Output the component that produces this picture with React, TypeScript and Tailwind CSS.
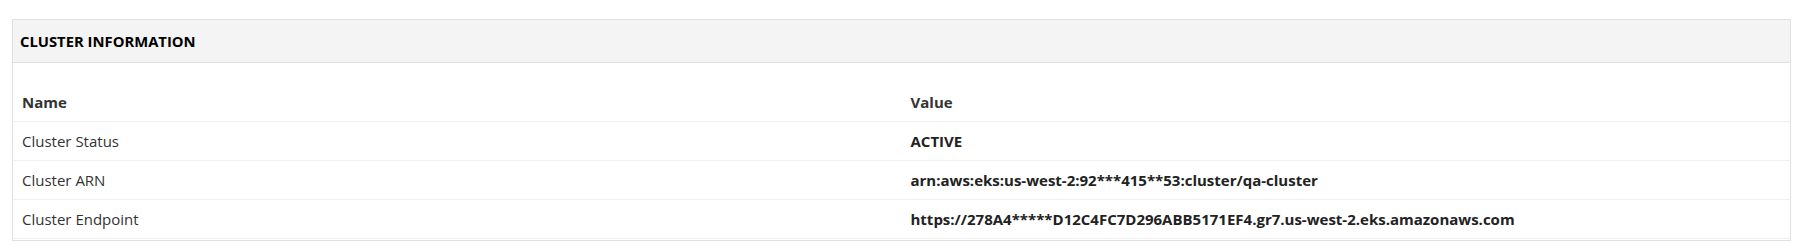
const rows = [
  { name: "Cluster Status", value: "ACTIVE" },
  { name: "Cluster ARN", value: "arn:aws:eks:us-west-2:92***415**53:cluster/qa-cluster" },
  {
    name: "Cluster Endpoint",
    value: "https://278A4*****D12C4FC7D296ABB5171EF4.gr7.us-west-2.eks.amazonaws.com",
  },
];

const App = () => {
  return (
    <div className="pt-[19px] pl-[12px] pr-[13px] bg-white font-['Open_Sans',sans-serif] text-[15px] text-[#333]">
      <div className="border border-[#e0e0e0]">
        <div className="h-[43px] flex items-center px-[7px] bg-[#f4f4f4] border-b border-[#e0e0e0]">
          <h3 className="font-bold text-[14.8px] text-black">CLUSTER INFORMATION</h3>
        </div>
        <div className="pt-[20px] pb-[1px]">
          <div className="grid grid-cols-2 h-[39px] border-b border-[#f0f0f0] font-bold">
            <div className="px-[9px] flex items-center">Name</div>
            <div className="px-[9px] flex items-center">Value</div>
          </div>
          {rows.map((row) => (
            <div key={row.name} className="grid grid-cols-2 h-[39px] border-b border-[#f0f0f0]">
              <div className="px-[9px] flex items-center">{row.name}</div>
              <div className="px-[9px] flex items-center font-bold text-[#222]">{row.value}</div>
            </div>
          ))}
        </div>
      </div>
    </div>
  );
};

export default App;
